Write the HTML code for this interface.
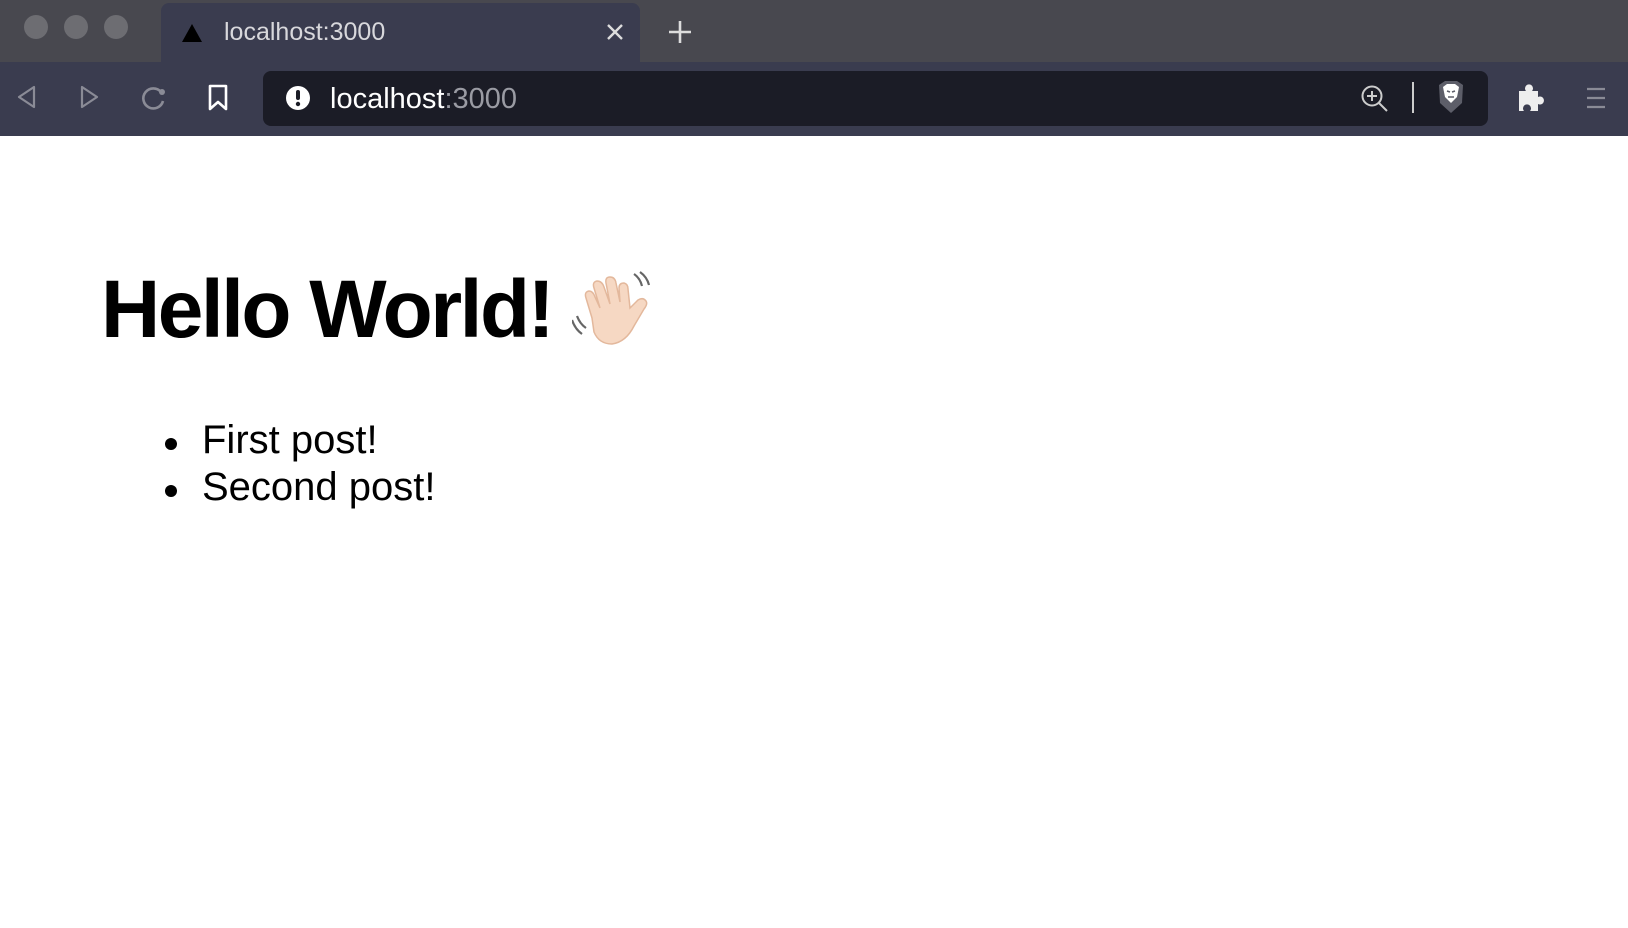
<!DOCTYPE html>
<html><head><meta charset="utf-8"><style>
*{margin:0;padding:0;box-sizing:border-box}
body{width:1628px;height:928px;overflow:hidden;background:#fff;font-family:"Liberation Sans",sans-serif;position:relative}
.strip{position:absolute;left:0;top:0;width:1628px;height:62px;background:#48484f}
.dot{position:absolute;top:15px;width:24px;height:24px;border-radius:50%;background:#6d6d72}
.tab{position:absolute;left:161px;top:3px;width:479px;height:60px;background:#3a3c4f;border-radius:8px 8px 0 0}
.tb{position:absolute;left:0;top:62px;width:1628px;height:74px;background:#3a3c4f}
.url{position:absolute;left:263px;top:71px;width:1225px;height:55px;background:#1b1c26;border-radius:8px}
.t{position:absolute;color:#d8d8dc;font-size:25px}
h1{position:absolute;left:101px;top:269px;font-size:82px;font-weight:bold;letter-spacing:-2.5px;color:#000;line-height:1}
ul{position:absolute;left:202px;top:417px;font-size:40px;line-height:47px;list-style:none;color:#000}
li{position:relative}
li:before{content:"";position:absolute;left:-37px;top:21px;width:12px;height:12px;border-radius:50%;background:#000}
</style></head><body>
<div class="strip"></div>
<div class="dot" style="left:24px"></div><div class="dot" style="left:64px"></div><div class="dot" style="left:104px"></div>
<div class="tab"></div>
<svg style="position:absolute;left:181px;top:23px" width="22" height="20"><polygon points="11,1 21,19 1,19" fill="#000"/></svg>
<div class="t" style="left:224px;top:18px">localhost:3000</div>
<svg style="position:absolute;left:606px;top:23px" width="18" height="18"><path d="M2 2L16 16M16 2L2 16" stroke="#ddd" stroke-width="2.4"/></svg>
<svg style="position:absolute;left:667px;top:19px" width="26" height="26"><path d="M13 2V24M2 13H24" stroke="#ddd" stroke-width="2.6"/></svg>
<div class="tb"></div>
<svg style="position:absolute;left:14px;top:84px" width="24" height="26"><path d="M20 3L5 13L20 23Z" fill="none" stroke="#8a8b96" stroke-width="2.2" stroke-linejoin="round"/></svg>
<svg style="position:absolute;left:78px;top:84px" width="24" height="26"><path d="M4 3L19 13L4 23Z" fill="none" stroke="#8a8b96" stroke-width="2.2" stroke-linejoin="round"/></svg>
<svg style="position:absolute;left:140px;top:84px" width="28" height="28"><path d="M21 8A10 10 0 1 0 23 17" fill="none" stroke="#8a8b96" stroke-width="2.6"/><circle cx="22" cy="8" r="3" fill="#8a8b96"/></svg>
<svg style="position:absolute;left:207px;top:84px" width="22" height="28"><path d="M3 2H19V25L11 18L3 25Z" fill="none" stroke="#fff" stroke-width="2.6" stroke-linejoin="round"/></svg>
<div class="url"></div>
<svg style="position:absolute;left:285px;top:85px" width="26" height="26"><circle cx="13" cy="13" r="12" fill="#fff"/><rect x="11" y="5" width="4" height="10" rx="2" fill="#1b1c26"/><circle cx="13" cy="19" r="2.2" fill="#1b1c26"/></svg>
<div class="t" style="left:330px;top:83px;font-size:29px;color:#fff">localhost<span style="color:#9a9ba3">:3000</span></div>
<svg style="position:absolute;left:1360px;top:84px" width="30" height="30"><circle cx="12" cy="12" r="9.5" fill="none" stroke="#ccc" stroke-width="2"/><path d="M12 7V17M7 12H17M19 19L27 27" stroke="#ccc" stroke-width="2"/></svg>
<div style="position:absolute;left:1412px;top:82px;width:2px;height:31px;background:#ccc"></div>
<svg style="position:absolute;left:1435px;top:79px" width="32" height="36"><path d="M4 6L10 2H22L28 6L27 24L16 34L5 24Z" fill="#5d5e69"/><path d="M8 8L12 5H20L24 8L22 18L16 24L10 18Z" fill="#fff"/><path d="M12 12L15 13M20 12L17 13M13 18H19" stroke="#5d5e69" stroke-width="1.6"/></svg>
<svg style="position:absolute;left:1516px;top:83px" width="32" height="30"><path d="M3 8H10A4 4 0 1 1 16 8H22V14A4 4 0 1 1 22 21V28H14A4 4 0 1 0 8 28H3Z" fill="#eee"/></svg>
<svg style="position:absolute;left:1586px;top:86px" width="20" height="24"><path d="M1 3H19M1 12H19M1 21H19" stroke="#8a8b96" stroke-width="2.2"/></svg>
<h1>Hello World!</h1>
<svg style="position:absolute;left:572px;top:268px" width="85" height="82" viewBox="0 0 85 82">
<path d="M62 6Q68 10 70 18M68 4Q75 9 77 17M5 48Q8 56 14 60M0 52Q3 61 10 66" stroke="#666" stroke-width="2.2" fill="none"/>
<path d="M20 50L14 30Q12 24 17 23Q21 23 23 29L28 40L22 20Q20 14 25 13Q30 13 32 19L38 36L34 15Q33 9 38 9Q43 9 44 15L48 34L47 20Q47 15 52 15Q56 16 56 21L58 40L66 32Q71 29 74 33Q76 36 72 41L62 58Q54 74 40 76Q27 76 22 64Z" fill="#f6d8c3" stroke="#e3b89c" stroke-width="1.5"/>
</svg>
<ul><li>First post!</li><li>Second post!</li></ul>
</body></html>
